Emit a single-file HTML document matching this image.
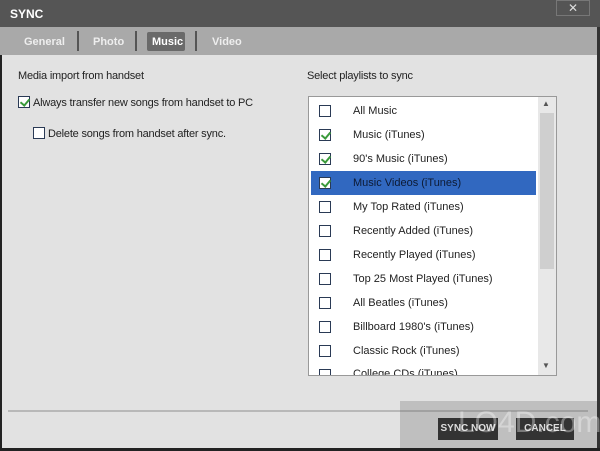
<!DOCTYPE html>
<html><head><style>
*{margin:0;padding:0;box-sizing:border-box}
html,body{width:600px;height:451px;overflow:hidden}
body{background:#e2e2e2;font-family:"Liberation Sans",sans-serif;position:relative}
.a{position:absolute;white-space:nowrap}
.t{font-size:11px;color:#222;letter-spacing:-0.2px}
.cb{position:absolute;width:12px;height:12px;border:1px solid #2a3a55;background:#fff}
.ck::after{content:"";position:absolute;left:3px;top:0px;width:4px;height:7px;border:solid #3a9a3a;border-width:0 2px 2px 0;transform:rotate(40deg)}
.row{position:absolute;left:311px;width:225px;height:24px}
.row .cb{left:8px;top:6px}
.row span{position:absolute;left:42px;top:6px;font-size:11px;color:#222;white-space:nowrap}
</style></head><body>
<div class="a" style="left:0;top:0;width:600px;height:27px;background:#555"></div>
<div class="a" style="left:10px;top:7px;font-size:12px;font-weight:bold;color:#fff">SYNC</div>
<div class="a" style="left:556px;top:0;width:34px;height:16px;border:1px solid #777;color:#ddd;font-size:12px;text-align:center;line-height:14px">✕</div>
<div class="a" style="left:0;top:27px;width:600px;height:28px;background:#a9a9a9"></div>
<div class="a" style="left:147px;top:32px;width:38px;height:19px;background:#6a6a6a;border-radius:2px"></div>
<div class="a" style="left:77px;top:31px;width:2px;height:20px;background:#555"></div>
<div class="a" style="left:135px;top:31px;width:2px;height:20px;background:#555"></div>
<div class="a" style="left:195px;top:31px;width:2px;height:20px;background:#555"></div>
<div class="a" style="left:24px;top:36px;font-size:11px;font-weight:bold;color:#eee">General</div>
<div class="a" style="left:93px;top:36px;font-size:11px;font-weight:bold;color:#eee">Photo</div>
<div class="a" style="left:152px;top:36px;font-size:11px;font-weight:bold;color:#fff">Music</div>
<div class="a" style="left:212px;top:36px;font-size:11px;font-weight:bold;color:#eee">Video</div>
<div class="a" style="left:0;top:55px;width:2px;height:396px;background:#222"></div>
<div class="a" style="left:597px;top:27px;width:3px;height:424px;background:#333"></div>
<div class="a" style="left:0;top:448px;width:600px;height:3px;background:#222"></div>
<div class="a t" style="left:18px;top:70px">Media import from handset</div>
<div class="cb ck" style="left:18px;top:96px"></div>
<div class="a t" style="left:33px;top:97px">Always transfer new songs from handset to PC</div>
<div class="cb" style="left:33px;top:127px"></div>
<div class="a t" style="left:48px;top:128px">Delete songs from handset after sync.</div>
<div class="a t" style="left:307px;top:70px">Select playlists to sync</div>
<div class="a" style="left:308px;top:96px;width:249px;height:280px;background:#fff;border:1px solid #999;overflow:hidden">
<div class="a" style="left:229px;top:0;width:18px;height:278px;background:#e8e8e8"></div>
<div class="a" style="left:231px;top:16px;width:14px;height:156px;background:#cfcfcf"></div>
<div class="a" style="left:233px;top:2px;font-size:8px;color:#555">▲</div>
<div class="a" style="left:233px;top:264px;font-size:8px;color:#555">▼</div>
</div>
<div class="row" style="top:99px"><div class="cb"></div><span>All Music</span></div>
<div class="row" style="top:123px"><div class="cb ck"></div><span>Music (iTunes)</span></div>
<div class="row" style="top:147px"><div class="cb ck"></div><span>90's Music (iTunes)</span></div>
<div class="row" style="top:171px;background:#3168c0"><div class="cb ck"></div><span style="color:#0d1a33">Music Videos (iTunes)</span></div>
<div class="row" style="top:195px"><div class="cb"></div><span>My Top Rated (iTunes)</span></div>
<div class="row" style="top:219px"><div class="cb"></div><span>Recently Added (iTunes)</span></div>
<div class="row" style="top:243px"><div class="cb"></div><span>Recently Played (iTunes)</span></div>
<div class="row" style="top:267px"><div class="cb"></div><span>Top 25 Most Played (iTunes)</span></div>
<div class="row" style="top:291px"><div class="cb"></div><span>All Beatles (iTunes)</span></div>
<div class="row" style="top:315px"><div class="cb"></div><span>Billboard 1980's (iTunes)</span></div>
<div class="row" style="top:339px"><div class="cb"></div><span>Classic Rock (iTunes)</span></div>
<div class="a" style="left:311px;top:363px;width:225px;height:12px;overflow:hidden"><div class="cb" style="left:8px;top:6px"></div><span style="position:absolute;left:42px;top:5px;font-size:11px;color:#222">College CDs (iTunes)</span></div>
<div class="a" style="left:8px;top:410px;width:580px;height:2px;background:#b8b8b8"></div>
<div class="a" style="left:400px;top:401px;width:197px;height:47px;background:rgba(110,110,110,0.3)"></div>
<div class="a" style="left:438px;top:418px;width:60px;height:22px;background:#333;color:#ddd;font-size:10px;font-weight:bold;text-align:center;line-height:22px">SYNC NOW</div>
<div class="a" style="left:516px;top:418px;width:58px;height:22px;background:#333;color:#ddd;font-size:10px;font-weight:bold;text-align:center;line-height:22px">CANCEL</div>
<div class="a" style="left:458px;top:406px;font-size:30px;color:rgba(255,255,255,0.35)">LO4D.com</div>
</body></html>
